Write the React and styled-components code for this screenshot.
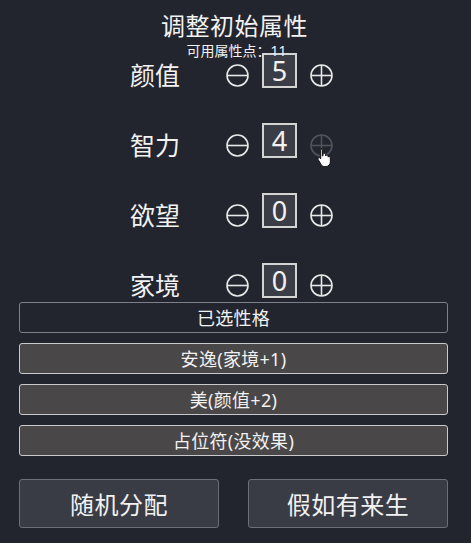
import React from "react";
import styled, { createGlobalStyle, css } from "styled-components";

const GlobalStyle = createGlobalStyle`
  html, body {
    margin: 0;
    padding: 0;
    background: #22252e;
  }

  body {
    font-family: "Noto Sans", "Noto Sans CJK SC", sans-serif;
    color: #f2f2f2;
  }
`;

const Page = styled.div`
  width: 471px;
  height: 543px;
  box-sizing: border-box;
  padding: 11px 23px 0 19px;
  display: flex;
  flex-direction: column;
  overflow: hidden;
  position: relative;
`;

const Header = styled.header`
  display: flex;
  flex-direction: column;
  align-items: center;
  margin-bottom: -6px;
  padding-left: 2px;
  position: relative;
`;

const Title = styled.h1`
  margin: 0;
  font-size: 24px;
  font-weight: 400;
  line-height: 30px;
  letter-spacing: 0.5px;
`;

const Points = styled.div`
  font-size: 14px;
  line-height: 16px;
  margin-top: 2px;
  padding-left: 4px;
`;

const Rows = styled.div`
  display: flex;
  flex-direction: column;
  gap: 35px;
  padding-left: 111px;
`;

const Row = styled.div`
  display: flex;
  align-items: center;
  height: 35px;
`;

const Label = styled.span`
  width: 96px;
  font-size: 25px;
  line-height: 30px;
  margin-top: 8px;
`;

const CircleButton = styled.button`
  width: 23px;
  height: 23px;
  padding: 0;
  border: none;
  background: none;
  color: #e8e8e8;
  margin-top: 10px;
  cursor: pointer;
  display: flex;

  ${({ disabled }) => disabled && css`
    color: #50535b;
    cursor: default;
  `}
`;

const Value = styled.div`
  width: 35px;
  height: 35px;
  box-sizing: border-box;
  margin: 0 13px;
  border: 2px solid #d4d4d4;
  background: #3b3d46;
  display: flex;
  align-items: center;
  justify-content: center;
  font-size: 27px;
  line-height: 1;
`;

const Cursor = styled.svg`
  position: absolute;
  left: 317px;
  top: 147px;
`;

const Traits = styled.div`
  display: flex;
  flex-direction: column;
  gap: 10px;
  margin-top: 4px;
`;

const Trait = styled.div`
  height: 31px;
  box-sizing: border-box;
  border-radius: 3px;
  border: 1.5px solid #c9c9cb;
  background: #4a4748;
  display: flex;
  align-items: center;
  justify-content: center;
  font-size: 18px;
  line-height: 1;
  letter-spacing: 0.3px;

  ${({ heading }) => heading && css`
    border-color: #7d808a;
    background: transparent;
  `}
`;

const Actions = styled.div`
  display: flex;
  justify-content: space-between;
  margin-top: 23px;
`;

const ActionButton = styled.button`
  width: 200px;
  height: 49px;
  box-sizing: border-box;
  border-radius: 3px;
  border: 1.5px solid #6c6f78;
  background: #3a3c45;
  color: #f2f2f2;
  font-family: inherit;
  font-size: 24px;
  letter-spacing: 0.5px;
  cursor: pointer;
`;

const Minus = () => (
  <svg width="23" height="23" viewBox="0 0 23 23" fill="none" stroke="currentColor" strokeWidth="1.6">
    <circle cx="11.5" cy="11.5" r="10.5" />
    <line x1="1" y1="11.5" x2="22" y2="11.5" />
  </svg>
);

const Plus = () => (
  <svg width="23" height="23" viewBox="0 0 23 23" fill="none" stroke="currentColor" strokeWidth="1.6">
    <circle cx="11.5" cy="11.5" r="10.5" />
    <line x1="1" y1="11.5" x2="22" y2="11.5" />
    <line x1="11.5" y1="1" x2="11.5" y2="22" />
  </svg>
);

const attributes = [
  { name: "颜值", value: 5 },
  { name: "智力", value: 4, maxed: true },
  { name: "欲望", value: 0 },
  { name: "家境", value: 0 },
];

const traits = ["安逸(家境+1)", "美(颜值+2)", "占位符(没效果)"];

export default function App() {
  return (
    <Page>
      <GlobalStyle />
      <Header>
        <Title>调整初始属性</Title>
        <Points>可用属性点：11</Points>
      </Header>

      <Rows>
        {attributes.map((a) => (
          <Row key={a.name}>
            <Label>{a.name}</Label>
            <CircleButton aria-label="减少"><Minus /></CircleButton>
            <Value>{a.value}</Value>
            <CircleButton aria-label="增加" disabled={a.maxed}><Plus /></CircleButton>
          </Row>
        ))}
      </Rows>

      <Traits>
        <Trait heading>已选性格</Trait>
        {traits.map((t) => (
          <Trait key={t}>{t}</Trait>
        ))}
      </Traits>

      <Actions>
        <ActionButton>随机分配</ActionButton>
        <ActionButton>假如有来生</ActionButton>
      </Actions>

      <Cursor width="14" height="20" viewBox="0 0 14 20">
        <path
          d="M4 1.5c.8 0 1.4.6 1.4 1.4V9l.6-.1V7.6c0-.8.6-1.3 1.3-1.3s1.3.5 1.3 1.3v1.3c.2-.6.7-.9 1.2-.9.7 0 1.3.5 1.3 1.3v.8c.2-.4.6-.6 1-.6.7 0 1.2.5 1.2 1.2v4.2c0 2.6-1.8 4.6-4.4 4.6H7.5c-1.5 0-2.6-.7-3.4-1.9L1.2 12.6c-.4-.6-.2-1.3.3-1.7.6-.4 1.3-.3 1.7.2l.5.7V2.9c0-.8.6-1.4 1.3-1.4z"
          fill="#fff"
          stroke="#111"
          strokeWidth="1"
        />
      </Cursor>
    </Page>
  );
}
